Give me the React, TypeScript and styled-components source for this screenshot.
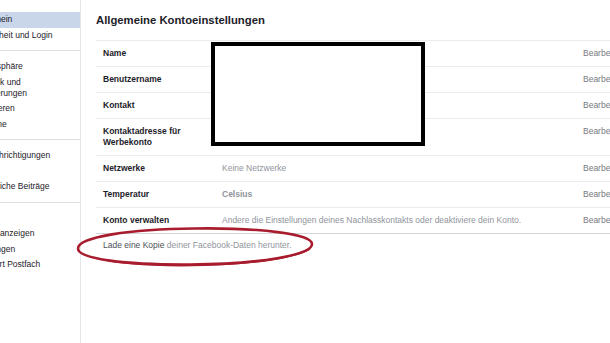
import React from "react";
import styled, { createGlobalStyle } from "styled-components";

const GlobalStyle = createGlobalStyle`
    html, body {
        margin: 0;
        padding: 0;
        background: #fff;
        overflow: hidden;
    }
    body {
        font-family: "Liberation Sans", Arial, sans-serif;
        color: #1d2129;
    }
`;

const Page = styled.div`
    display: flex;
    width: 610px;
    height: 343px;
    overflow: hidden;
    background: #fff;
`;

const Sidebar = styled.nav`
    flex: 0 0 80px;
    border-right: 1px solid #e5e7eb;
    overflow: hidden;
    padding-top: 4px;
`;

const Group = styled.ul`
    list-style: none;
    margin: 0;
    padding: 8px 0 7px;
    border-bottom: 1px solid #dddfe2;

    &:last-child {
        border-bottom: none;
    }
`;

const Item = styled.li<{ $active?: boolean }>`
    padding: 2.25px 0;
    overflow: hidden;
    background: ${(p) => (p.$active ? "#c9d6ea" : "transparent")};
    font-size: 8.5px;
    line-height: 11px;
    color: #1d2129;
`;

const ItemText = styled.div`
    margin-left: -25px;
    width: 96px;
    white-space: normal;
`;

const Main = styled.main`
    flex: 1;
    min-width: 0;
    padding: 13px 0 0 15px;
`;

const Title = styled.h2`
    margin: 0 0 12px;
    font-size: 11.3px;
    line-height: 15px;
    font-weight: bold;
    color: #1d2129;
`;

const Table = styled.div`
    position: relative;
    width: 600px;
    border-bottom: 1px solid #d3d6db;
`;

const Row = styled.div`
    display: grid;
    grid-template-columns: 119px 361px auto;
    padding: 7px 0 7px 7px;
    border-top: 1px solid #e9ebee;
    font-size: 8.5px;
    line-height: 11px;
`;

const Label = styled.div`
    font-weight: bold;
    color: #1d2129;
    padding-right: 10px;
`;

const Value = styled.div<{ $bold?: boolean }>`
    color: #90949c;
    font-weight: ${(p) => (p.$bold ? "bold" : "normal")};
`;

const Edit = styled.div`
    color: #767a80;
    white-space: nowrap;
`;

const Redaction = styled.div`
    position: absolute;
    top: 2px;
    left: 115px;
    width: 214px;
    height: 104px;
    box-sizing: border-box;
    border: 4px solid #000;
    background: #fff;
`;

const Footer = styled.div`
    position: relative;
    padding: 6px 0 0 7px;
    font-size: 8.5px;
    line-height: 11px;
    color: #90949c;
`;

const Strong = styled.span`
    color: #4b4f56;
`;

const Circle = styled.svg`
    position: absolute;
    left: -22px;
    top: -10px;
    overflow: visible;
`;

const groups: { label: string; active?: boolean }[][] = [
    [{ label: "Allgemein", active: true }, { label: "Sicherheit und Login" }],
    [
        { label: "Privatsphäre" },
        { label: "Chronik und Markierungen" },
        { label: "Blockieren" },
        { label: "Sprache" },
    ],
    [{ label: "Benachrichtigungen" }, { label: "Mobil" }, { label: "Öffentliche Beiträge" }],
    [
        { label: "Apps" },
        { label: "Werbeanzeigen" },
        { label: "Zahlungen" },
        { label: "Support Postfach" },
    ],
];

const rows: { label: string; value?: string; bold?: boolean }[] = [
    { label: "Name" },
    { label: "Benutzername" },
    { label: "Kontakt" },
    { label: "Kontaktadresse für Werbekonto" },
    { label: "Netzwerke", value: "Keine Netzwerke" },
    { label: "Temperatur", value: "Celsius", bold: true },
    {
        label: "Konto verwalten",
        value: "Andere die Einstellungen deines Nachlasskontakts oder deaktiviere dein Konto.",
    },
];

const App = () => {
    return (
        <Page>
            <GlobalStyle />
            <Sidebar>
                {groups.map((group, i) => (
                    <Group key={i}>
                        {group.map((item) => (
                            <Item key={item.label} $active={item.active}>
                                <ItemText>{item.label}</ItemText>
                            </Item>
                        ))}
                    </Group>
                ))}
            </Sidebar>
            <Main>
                <Title>Allgemeine Kontoeinstellungen</Title>
                <Table>
                    {rows.map((row) => (
                        <Row key={row.label}>
                            <Label>{row.label}</Label>
                            <Value $bold={row.bold}>{row.value}</Value>
                            <Edit>Bearbeiten</Edit>
                        </Row>
                    ))}
                    <Redaction />
                </Table>
                <Footer>
                    <Strong>Lade eine Kopie</Strong> deiner Facebook-Daten herunter.
                    <Circle width="244" height="44" viewBox="0 0 244 44">
                        <path
                            d="M 120 4.5 C 186 3.5 238 10 238 20 C 238 31 186 40 116 40.5 C 52 41 4 35 4 24.5 C 4 13 56 5 120 4.5 Z"
                            fill="none"
                            stroke="#a81c2e"
                            strokeWidth="2.6"
                        />
                        <path
                            d="M 20 33 C 50 40.5 90 41.5 130 40.5 C 180 39 222 33 236 24"
                            fill="none"
                            stroke="#a81c2e"
                            strokeWidth="1.6"
                            transform="translate(0 0.8)"
                        />
                    </Circle>
                </Footer>
            </Main>
        </Page>
    );
};

export default App;
